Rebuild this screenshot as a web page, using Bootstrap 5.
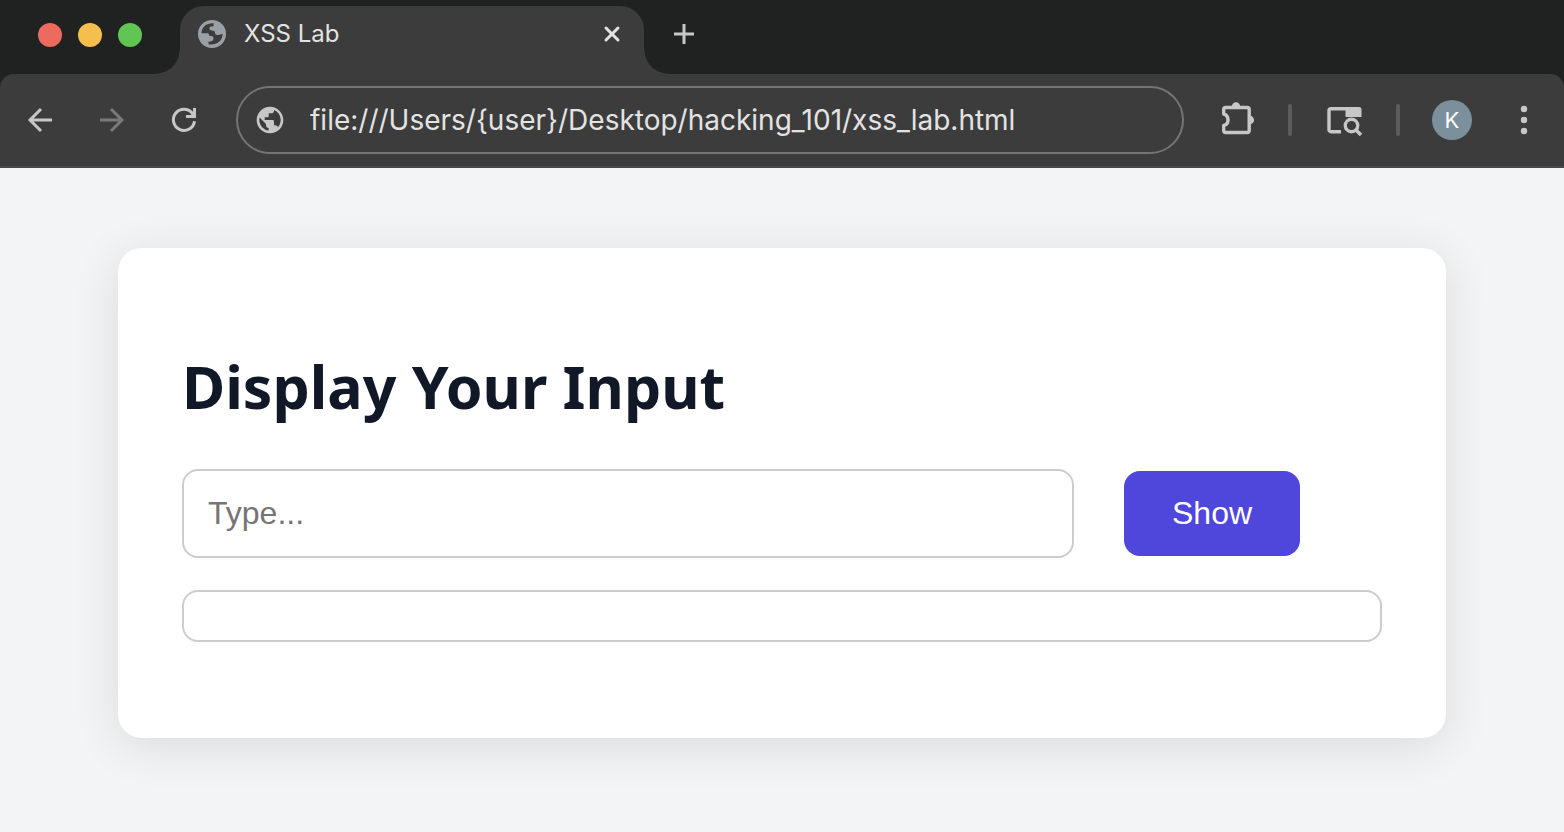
<!DOCTYPE html>
<html lang="en">
<head>
<meta charset="utf-8">
<meta name="viewport" content="width=device-width, initial-scale=1">
<title>XSS Lab</title>
<link href="https://cdn.jsdelivr.net/npm/bootstrap@5.3.0/dist/css/bootstrap.min.css" rel="stylesheet">
<style>
  body { background: #f3f4f6; font-family: "Liberation Sans", Arial, sans-serif; }
  .chrome-ui { background: #202221; font-family: Inter, sans-serif; color: #e3e3e3; }
  .tab-strip { height: 74px; padding-top: 6px; }
  .traffic { width: 180px; padding-left: 38px; gap: 16px; padding-bottom: 10px; }
  .light-dot { width: 24px; height: 24px; border-radius: 50%; }
  .dot-close { background: #ed6a5e; }
  .dot-min { background: #f5bf4f; }
  .dot-max { background: #61c554; }
  .page-tab { position: relative; width: 464px; gap: 18px; background: #3c3c3c; border-radius: 24px 24px 0 0; padding: 0 20px 12px 18px; font-size: 24px; line-height: 32px; }
  .page-tab::before, .page-tab::after { content: ""; position: absolute; bottom: 0; width: 24px; height: 24px; }
  .page-tab::before { right: 100%; background: radial-gradient(circle at 0 0, transparent 23px, #3c3c3c 24px); }
  .page-tab::after { left: 100%; background: radial-gradient(circle at 100% 0, transparent 23px, #3c3c3c 24px); }
  .icon-btn { border: 0; padding: 0; background: none; color: #c7c7c7; display: flex; }
  .icon-btn:disabled { color: #7a7a7a; }
  .new-tab { padding: 0 0 12px 28px; }
  .tool-row { height: 94px; padding: 0 20px 0 24px; background: #3c3c3c; border-radius: 14px 14px 0 0; border-bottom: 2px solid #474949; }
  .nav-group { gap: 40px; margin-right: 36px; }
  .tool-group { gap: 32px; margin-left: 32px; }
  .address { height: 68px; min-width: 0; border: 2px solid #757575; border-radius: 34px; padding: 0 16px; gap: 24px; color: #c7c7c7; }
  .address input { border: 0; outline: 0; background: none; color: #e3e3e3; font-size: 28px; line-height: 36px; padding: 0; min-width: 0; }
  .tool-sep { width: 4px; height: 32px; border-radius: 2px; background: #5c5c5c; }
  .avatar { width: 40px; height: 40px; border-radius: 50%; background: #7b8f9c; color: #fff; font-size: 22px; justify-content: center; align-items: center; }
  .lab-main { padding: 80px 118px; }
  .lab-card { background: #fff; border-radius: 24px; padding: 104px 64px 96px; box-shadow: 0 8px 48px rgba(0,0,0,.1); }
  .lab-card h1 { font-family: "Noto Sans", sans-serif; font-weight: 700; font-size: 59px; line-height: 68px; color: #111827; margin: 0 0 49px; }
  .lab-form { gap: 50px; margin-bottom: 32px; }
  .lab-form input { width: 892px; height: 89px; min-width: 0; border: 2px solid #ccc; border-radius: 16px; padding: 0 24px; font-size: 32px; }
  .lab-form input::placeholder { color: #757575; }
  .lab-form button { border: 0; border-radius: 16px; background: #4f46dc; color: #fff; font-size: 32px; line-height: 37px; padding: 24px 48px; }
  .lab-output { display: block; height: 52px; border: 2px solid #ccc; border-radius: 16px; }
</style>
</head>
<body>
<header class="chrome-ui">
  <div class="tab-strip d-flex">
    <div class="traffic d-flex align-items-center flex-shrink-0">
      <span class="light-dot dot-close"></span><span class="light-dot dot-min"></span><span class="light-dot dot-max"></span>
    </div>
    <div class="page-tab d-flex align-items-center">
      <svg width="28" height="28" viewBox="0 0 28 28"><circle cx="14" cy="14" r="14" fill="#9aa0a6"/><path fill="#3c3c3c" d="M3.500 13.200C3.500 7 8.500 2.800 15.600 3.200V5.500C15.600 6.700 14.500 6.500 13 6.500C11.800 6.500 11.500 7.500 11.500 8.500C11.500 9.800 12.500 10.500 14 10.500C16.500 10.500 17 11.500 17 13C17 14.500 18.500 15 20 15C22 15 22.500 14 24.600 14C24.800 20 19 26 10.500 24.200V21.500C13.500 21.500 15.500 21 15.500 18.500C15.500 16.500 14 16 12.500 16C11.500 16 11 15.500 11 14.500C11 13.500 10 13.200 9 13.200z"/></svg>
      <span>XSS Lab</span>
      <button class="icon-btn ms-auto" aria-label="Close tab"><svg width="24" height="24" viewBox="0 0 24 24" fill="none" stroke="#e3e3e3" stroke-width="3" stroke-linecap="round"><path d="M6 6l12 12M18 6L6 18"/></svg></button>
    </div>
    <button class="icon-btn new-tab align-items-center" aria-label="New tab"><svg width="24" height="24" viewBox="0 0 24 24" fill="none" stroke="currentColor" stroke-width="3"><path d="M12 2v20M2 12h20"/></svg></button>
  </div>
  <nav class="tool-row d-flex align-items-center" aria-label="Browser toolbar">
    <div class="nav-group d-flex">
      <button class="icon-btn" aria-label="Back"><svg width="32" height="32" viewBox="0 0 32 32" fill="none" stroke="currentColor" stroke-width="3"><path d="M28 16H6M17 5L6 16l11 11"/></svg></button>
      <button class="icon-btn" aria-label="Forward" disabled><svg width="32" height="32" viewBox="0 0 32 32" fill="none" stroke="currentColor" stroke-width="3"><path d="M4 16h22M15 5l11 11-11 11"/></svg></button>
      <button class="icon-btn" aria-label="Reload"><svg width="32" height="32" viewBox="0 0 32 32" fill="currentColor"><path fill="none" stroke="currentColor" stroke-width="3" d="M26.500 17.200A10.600 10.600 0 1 1 24.500 9.500"/><path d="M28 4v10H18v-3h4.500L25 8.500V4z"/></svg></button>
    </div>
    <div class="address d-flex align-items-center flex-grow-1">
      <svg class="flex-shrink-0" width="32" height="32" viewBox="0 0 24 24" fill="currentColor"><path d="M12 2C6.480 2 2 6.480 2 12s4.480 10 10 10 10-4.480 10-10S17.520 2 12 2zm-1 17.930c-3.950-.490-7-3.850-7-7.930 0-.620.080-1.210.210-1.790L9 15v1c0 1.100.900 2 2 2v1.930zm6.900-2.540c-.260-.810-1-1.390-1.900-1.390h-1v-3c0-.550-.450-1-1-1H8v-2h2c.550 0 1-.450 1-1V7h2c1.100 0 2-.900 2-2v-.410c2.930 1.190 5 4.060 5 7.410 0 2.080-.800 3.970-2.100 5.390z"/></svg>
      <input class="flex-grow-1" type="text" aria-label="Address" value="file:///Users/{user}/Desktop/hacking_101/xss_lab.html">
    </div>
    <div class="tool-group d-flex align-items-center flex-shrink-0">
      <button class="icon-btn" aria-label="Extensions"><svg width="40" height="40" viewBox="0 0 40 40" fill="currentColor"><path fill="none" stroke="currentColor" stroke-width="3.400" stroke-linejoin="round" d="M7.700 14V9.500a2 2 0 0 1 2-2h21.500a2 2 0 0 1 2 2v21a2 2 0 0 1-2 2H9.700a2 2 0 0 1-2-2V25.500c2.500-.500 4.300-2.500 4.300-5.500s-1.800-5.300-4.300-6z"/><path d="M15.800 7a4.200 4.800 0 0 1 8.400 0zM33.500 15.600a4.600 4.400 0 0 1 0 8.800z"/></svg></button>
      <span class="tool-sep"></span>
      <button class="icon-btn" aria-label="Search this page"><svg width="40" height="40" viewBox="0 0 40 40" fill="currentColor"><path fill="none" stroke="currentColor" stroke-width="3.400" d="M17 31.700H7a2 2 0 0 1-2-2V10.700a2 2 0 0 1 2-2h17"/><path d="M21.500 7H35a2.500 2.500 0 0 1 2.500 2.500v7.500h-16z"/><circle cx="27.500" cy="25.500" r="7.900"/><circle cx="27.500" cy="25.500" r="4.600" fill="#3c3c3c"/><path stroke="currentColor" stroke-width="3.600" d="M32 30l5 5"/></svg></button>
      <span class="tool-sep"></span>
      <button class="icon-btn avatar" aria-label="Profile">K</button>
      <button class="icon-btn" aria-label="Menu"><svg width="40" height="40" viewBox="0 0 40 40" fill="currentColor"><circle cx="20" cy="9" r="3.200"/><circle cx="20" cy="20" r="3.200"/><circle cx="20" cy="31" r="3.200"/></svg></button>
    </div>
  </nav>
</header>
<main class="lab-main">
  <section class="lab-card">
    <h1>Display Your Input</h1>
    <form class="lab-form d-flex align-items-center">
      <input type="text" placeholder="Type..." aria-label="Your input">
      <button type="button">Show</button>
    </form>
    <output class="lab-output"></output>
  </section>
</main>
<script src="https://cdn.jsdelivr.net/npm/bootstrap@5.3.0/dist/js/bootstrap.bundle.min.js"></script>
</body>
</html>
